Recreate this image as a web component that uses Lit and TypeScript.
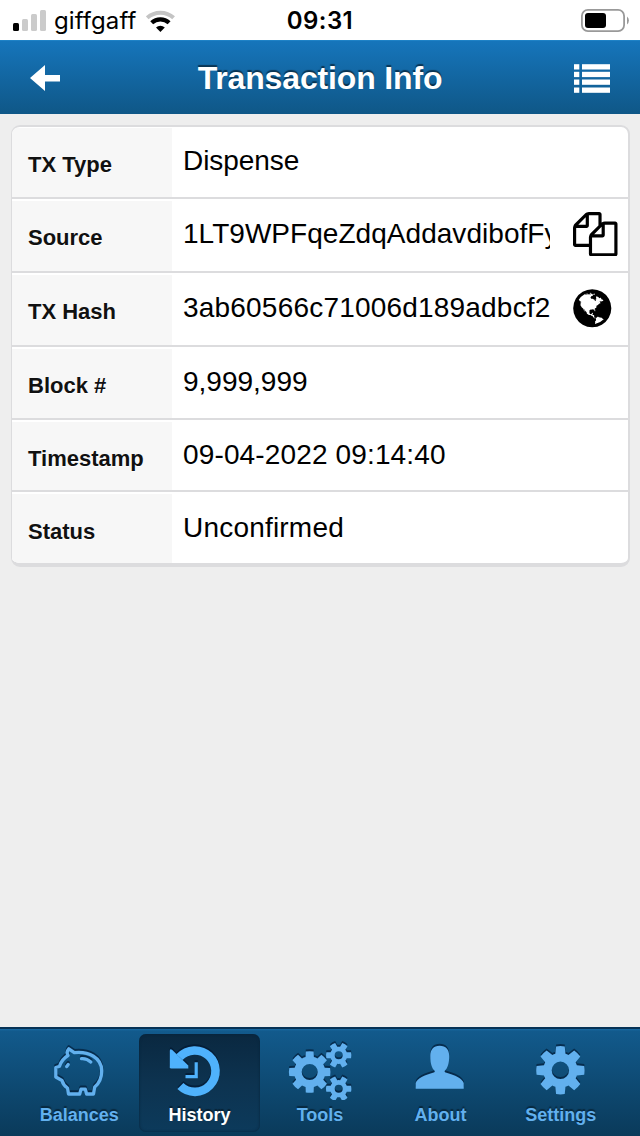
import { LitElement, html, css, svg } from "lit";
import { customElement } from "lit/decorators.js";
import { classMap } from "lit/directives/class-map.js";

/** Outline of a cog: trapezoid teeth around a body, with a round hole. */
function gear(cx: number, cy: number, outer: number, body: number, hole: number, teeth: number, base: number, tip: number): string {
  const pt = (r: number, a: number) => `${(cx + r * Math.cos(a)).toFixed(2)} ${(cy + r * Math.sin(a)).toFixed(2)}`;
  let d = "";
  for (let i = 0; i < teeth; i++) {
    const a = (i * 2 * Math.PI) / teeth;
    d += `${i ? `A${body} ${body} 0 0 1 ` : "M"}${pt(body, a - base)}L${pt(outer, a - tip)}A${outer} ${outer} 0 0 1 ${pt(outer, a + tip)}L${pt(body, a + base)}`;
  }
  d += `A${body} ${body} 0 0 1 ${pt(body, -base)}Z`;
  d += `M${cx + hole} ${cy}A${hole} ${hole} 0 1 0 ${cx - hole} ${cy}A${hole} ${hole} 0 1 0 ${cx + hole} ${cy}Z`;
  return d;
}

const COPY =
  "M1696 384q40 0 68 28t28 68v1216q0 40-28 68t-68 28h-960q-40 0-68-28t-28-68v-288h-544q-40 0-68-28t-28-68v-672q0-40 20-88t48-76l408-408q28-28 76-48t88-20h416q40 0 68 28t28 68v328q68-40 128-40h416zm-544 213l-299 299h299v-299zm-640-384l-299 299h299v-299zm196 647l316-316v-416h-384v416q0 40-28 68t-68 28h-416v640h512v-256q0-40 20-88t48-76zm956 804v-1152h-384v416q0 40-28 68t-68 28h-416v640h896z";

const GLOBE =
  "M896 128q209 0 385.5 103t279.5 279.5 103 385.5-103 385.5-279.5 279.5-385.5 103-385.5-103-279.5-279.5-103-385.5 103-385.5 279.5-279.5 385.5-103zm274 521q-2 1-9.5 9.5t-13.5 9.5q2 0 4.5-5t5-11 3.5-7q6-7 22-15 14-6 52-12 34-8 51 11-2-2 9.5-13t14.5-12q3-2 15-4.5t15-7.5l2-22q-12 1-17.5-7t-6.5-21q0 2-6 8 0-7-4.5-8t-11.5 1-9 1q-10-3-15-7.5t-8-16.5-4-15q-2-5-9.5-11t-9.5-10q-1-2-2.5-5.5t-3-6.5-4-5.5-5.5-2.5-7 5-7.5 10-4.5 5q-3-2-6-1.5t-4.5 1-4.5 3-5 3.5q-3 2-8.5 3t-8.5 2q15-5-1-11-10-4-16-3 9-4 7.5-12t-8.5-14h5q-1-4-8.5-8.5t-17.5-8.5-13-6q-8-5-34-9.5t-33-.5q-5 6-4.5 10.5t4 14 3.5 12.5q1 6-5.5 13t-6.5 12q0 7 14 15.5t10 21.5q-3 8-16 16t-16 12q-5 8-1.5 18.5t10.5 16.5q2 2 1.5 4t-3.5 4.5-5.5 4-6.5 3.5l-3 2q-11 5-20.5-6t-13.5-26q-7-25-16-30-23-8-29 1-5-13-41-26-25-9-58-4 6-1 0-15-7-15-19-12 3-6 4-17.5t1-13.5q3-13 12-23 1-1 7-8.5t9.5-13.5.5-6q35 4 50-11 5-5 11.500-17t10.500-17q9-6 14-5.500t14.500 5.500 14.500 5q14 1 15.500-11t-7.500-20q12 1 3-17-4-7-8-9-12-4-27 5-8 4 2 8-1-1-9.500 10.500t-16.500 17.500-16-5q-1-1-5.500-13.500t-9.500-13.500q-8 0-16 15 3-8-11-15t-24-8q19-12-8-27-7-4-20.500-5t-19.500 4q-5 7-5.500 11.500t5 8 10.500 5.500 11.500 4 8.500 3q14 10 8 14-2 1-8.500 3.500t-11.500 4.500-6 4q-3 4 0 14t-2 14q-5-5-9-17.500t-7-16.500q7 9-25 6l-10-1q-4 0-16 2t-20.500 1-13.500-8q-4-8 0-20 1-4 4-2-4-3-11-9.500t-10-8.500q-46 15-94 41 6 1 12-1 5-2 13-6.500t10-5.500q34-14 42-7l5-5q14 16 20 25-7-4-30-1-20 6-22 12 7 12 5 18-4-3-11.500-10t-14.500-11-15-5q-16 0-22 1-146 80-235 222 7 7 12 8 4 1 5 9t2.500 11 11.500-3q9 8 3 19 1-1 44 27 19 17 21 21 3 11-10 18-1-2-9-9t-9-4q-3 5 .5 18.500t10.500 12.500q-7 0-9.500 16t-2.500 35.500-1 23.500l2 1q-3 12 5.500 34.500t21.500 19.500q-13 3 20 43 6 8 8 9 3 2 12 7.500t15 10 10 10.500q4 5 10 22.500t14 23.500q-2 6 9.500 20t10.500 23q-1 0-2.500 1t-2.500 1q3 7 15.500 14t15.500 13q1 3 2 10t3 11 8 2q2-20-24-62-15-25-17-29-3-5-5.500-15.500t-4.500-14.500q2 0 6 1.500t8.500 3.500 7.500 4 2 3q-3 7 2 17.500t12 18.500 17 19 12 13q6 6 14 19.500t0 13.500q9 0 20 10.500t17 19.500q5 8 8 26t5 24q2 7 8.500 13.500t12.500 9.500l16 8 13 7q5 2 18.500 10.500t21.500 11.500q10 4 16 4t14.500-2.500 13.500-3.500q15-2 29 15t21 21q36 19 55 11-2 1 .5 7.500t8 15.500 9 14.500 5.500 8.500q5 6 18 15t18 15q6-4 7-9-3 8 7 20t18 10q14-3 14-32-31 15-49-18 0-1-2.500-5.500t-4-8.500-2.500-8.500 0-7.500 5-3q9 0 10-3.500t-2-12.500-4-13q-1-8-11-20t-12-15q-5 9-16 8t-16-9q0 1-1.500 5.500t-1.500 6.500q-13 0-15-1 1-3 2.500-17.500t3.500-22.500q1-4 5.500-12t7.500-14.500 4-12.500-4.500-9.500-17.500-2.500q-19 1-26 20-1 3-3 10.500t-5 11.500-9 7q-7 3-24 2t-24-5q-13-8-22.500-29t-9.500-37q0-10 2.500-26.500t3-25-5.500-24.500q3-2 9-9.500t10-10.500q2-1 4.500-1.500t4.500 0 4-1.500 3-6q-1-1-4-3-3-3-4-3 7 3 28.500-1.500t27.500 1.500q15 11 22-2 0-1-2.500-9.500t-.5-13.500q5 27 29 9 3 3 15.500 5t17.500 5q3 2 7 5.500t5.500 4.500 5-.5 8.500-6.500q10 14 12 24 11 40 19 44 7 3 11 2t4.500-9.500 0-14-1.500-12.500l-1-8v-18l-1-8q-15-3-18.500-12t1.500-18.500 15-18.500q1-1 8-3.500t15.500-6.500 12.500-8q21-19 15-35 7 0 11-9-1 0-5-3t-7.500-5-4.500-2q9-5 2-16 5-3 7.500-11t7.500-10q9 12 21 2 7-8 1-16 5-7 20.500-10.500t18.500-9.500q7 2 8-2t1-12 3-12q4-5 15-9t13-5l17-11q3-4 0-4 18 2 31-11 10-11-6-20 3-6-3-9.500t-15-5.500q3-1 11.500-.5t10.500-1.500q15-10-7-16-17-5-43 12zm-163 877q206-36 351-189-3-3-12.500-4.500t-12.500-3.500q-18-7-24-8 1-7-2.500-13t-8-9-12.500-8-11-7q-2-2-7-6t-7-5.500-7.500-4.500-8.500-2-10 1l-3 1q-3 1-5.500 2.500t-5.500 3-4 3 0 2.500q-21-17-36-22-5-1-11-5.500t-10.500-7-10-1.500-11.500 7q-5 5-6 15t-2 13q-7-5 0-17.500t2-18.500q-3-6-10.500-4.500t-12 4.500-11.500 8.500-9 6.500-8.500 5.500-8.500 7.500q-3 4-6 12t-5 11q-2-4-11.500-6.500t-9.500-5.500q2 10 4 35t5 38q7 31-12 48-27 25-29 40-4 22 12 26 0 7-8 20.500t-7 21.500q0 6 2 16z";

/** Tab glyphs, drawn in a 120x66 box centred over the tab's label. */
const tabIcons = {
  balances: svg`
    <g fill="none" stroke="currentColor" stroke-width="3.300" stroke-linejoin="round" stroke-linecap="round">
      <path d="M49.800 14.800L55.300 18.600C70 17 82.500 24 82.700 36.500C82.800 44 80.300 49 75.700 53L74.500 60H67.600L66.300 55.200H62L60.700 60H49.500L48.500 54C45.500 52 43.800 49.500 43 46.500L36.800 43V33.500L40.500 32.300C42 27 45 24 49 21.500C47.600 19 48 16.800 49.800 14.800Z"/>
      <path d="M62.500 24.700C66 24.400 69.200 25.600 71.800 28"/>
      <path d="M47.700 32.600L49.200 30.600"/>
    </g>`,
  history: svg`
    <path fill="none" stroke="currentColor" stroke-width="8.600" d="M39.500 23.200A20.700 20.700 0 1 1 40.400 52"/>
    <path fill="currentColor" d="M29.800 16.800Q30 14.300 32.300 16L48.300 31.500V34.500H31.300Q29.800 34.500 29.800 33.200Z"/>
    <path fill="none" stroke="currentColor" stroke-width="3.200" d="M56.200 28.200V42.600H45.500"/>`,
  tools: svg`
    <path fill="currentColor" fill-rule="evenodd" d="${gear(49.700, 38, 20.800, 15.600, 8, 8, 0.27, 0.19)}"/>
    <path fill="currentColor" fill-rule="evenodd" d="${gear(78.700, 21.300, 12.700, 8.600, 4, 6, 0.36, 0.24)}"/>
    <path fill="currentColor" fill-rule="evenodd" d="${gear(78.700, 54.700, 12.700, 8.600, 4, 6, 0.36, 0.24)}"/>`,
  about: svg`
    <path fill="currentColor" d="M59.600 11.800C66 11.800 69.200 15.800 69.200 22C69.200 29 67.800 34 64.600 37C64.600 38.200 65.200 38.400 66.500 38.800C75 41 82 44.500 83.700 49V54.800H35.700V49C37.400 44.500 44.400 41 52.900 38.800C54.200 38.400 54.800 38.200 54.800 37C51.600 34 50.300 29 50.300 22C50.300 15.800 53.500 11.800 59.600 11.800Z"/>`,
  settings: svg`
    <path fill="currentColor" fill-rule="evenodd" d="${gear(59.400, 36.300, 24.200, 17.200, 8.700, 8, 0.3, 0.18)}"/>`,
};

@customElement("status-bar")
class StatusBar extends LitElement {
  static styles = css`
    :host { display: grid; grid-template-columns: 1fr auto 1fr; align-items: center; height: 40px; background: #fff; color: #000; font-family: Inter, "Liberation Sans", sans-serif; font-size: 24px; }
    .side { display: flex; align-items: center; }
    .left { padding-left: 13px; }
    .right { justify-content: flex-end; padding-right: 11px; }
    svg { display: block; flex: none; }
    .carrier { margin: 0 9px 0 7px; width: 83px; white-space: nowrap; line-height: 40px; letter-spacing: 0.1px; }
    .time { font-weight: 600; letter-spacing: 0.400px; line-height: 41px; }
  `;
  render() {
    return html`
      <div class="side left">
        <svg width="34" height="40" viewBox="0 0 34 40">
          <rect x="0" y="22" width="6" height="8" rx="1.500" />
          <g fill="#cbcbcb">
            <rect x="9" y="18" width="6" height="12" rx="1.500" />
            <rect x="18" y="13" width="6" height="17" rx="1.500" />
            <rect x="27" y="9" width="6" height="21" rx="1.500" />
          </g>
        </svg>
        <span class="carrier">giffgaff</span>
        <svg width="30" height="40" viewBox="0 0 30 40">
          <path d="M1.200 16.800A19.500 19.500 0 0 1 27.600 16.800" fill="none" stroke="#c4c4c4" stroke-width="4" />
          <path d="M5.700 21.800A12.600 12.600 0 0 1 23.100 21.800" fill="none" stroke="#000" stroke-width="4.200" />
          <path d="M10 26.400A6.400 6.400 0 0 1 18.800 26.400L14.400 31Z" />
        </svg>
      </div>
      <span class="time">09:31</span>
      <div class="side right">
        <svg width="49" height="40" viewBox="0 0 49 40">
          <rect x="1.900" y="8.900" width="42.200" height="21.200" rx="6" fill="none" stroke="#999" stroke-width="1.800" />
          <rect x="5" y="12" width="21" height="15" rx="3" />
          <path d="M47 15.500Q48.900 17 48.900 19.500T47 23.500Z" fill="#999" />
        </svg>
      </div>`;
  }
}

@customElement("title-bar")
class TitleBar extends LitElement {
  static styles = css`
    :host { display: flex; align-items: center; justify-content: space-between; box-sizing: border-box; height: 74px; padding: 0 30px; border-top: 1px solid #1f82c6; background: linear-gradient(#1675bb, #0f5787); color: #fff; }
    h1 { margin: 0; font: bold 32px/74px "Liberation Sans", Arial, sans-serif; letter-spacing: -0.150px; text-shadow: 0 -2px 1px rgba(0, 0, 0, 0.5); }
    svg { display: block; }
    .arrow { margin-right: 6px; }
  `;
  render() {
    return html`
      <svg class="arrow" width="30" height="28" viewBox="0 0 30 28"><path fill="#fff" d="M0 14L15 1V11H30V17.500H15V27Z" /></svg>
      <h1>Transaction Info</h1>
      <svg width="36" height="30" viewBox="0 0 36 30" fill="#fff">
        ${[1.200, 8.800, 16.500, 24.500].map((y) => svg`<rect x="0" y=${y} width="5.300" height="5.300"/><rect x="8" y=${y} width="28" height="5.300"/>`)}
      </svg>`;
  }
}

interface Field {
  label: string;
  value: string;
  height: number;
  /** Letter spacing of the value, in px. */
  tracking: number;
  icon?: string;
}

@customElement("detail-card")
class DetailCard extends LitElement {
  static styles = css`
    :host { display: block; margin: 11px 10px 0 11px; border: 2px solid #dcdcde; border-width: 2px 2px 4px 1px; border-radius: 9px; background: #fff; overflow: hidden; font-family: "Liberation Sans", Arial, sans-serif; color: #000; }
    .row { display: grid; grid-template-columns: 160px 378px 1fr; }
    .row + .row { border-top: 2px solid #dcdcde; }
    .label { margin-top: 2px; padding: 24px 0 0 16px; background: #f7f7f7; color: #111; font-weight: bold; font-size: 22px; line-height: 26px; text-shadow: 0 1px 1px #fff; }
    .value { padding: 18px 0 0 11px; font-size: 28px; line-height: 34px; overflow: hidden; white-space: nowrap; }
    .icon { display: flex; align-items: center; padding: 0 0 2px 23px; }
    .icon svg { flex: none; }
    .globe { padding-left: 20px; }
    .row:first-child .label { margin-top: 1px; }
    .row:first-child .value { padding-top: 17px; }
    .row:last-child .label { padding-top: 25px; }
    .row:last-child .value { padding-top: 19px; }
  `;
  fields: Field[] = [
    { label: "TX Type", value: "Dispense", height: 70, tracking: -0.05 },
    { label: "Source", value: "1LT9WPFqeZdqAddavdibofFy", height: 72, tracking: 0.04, icon: "copy" },
    { label: "TX Hash", value: "3ab60566c71006d189adbcf2", height: 72, tracking: 0.2, icon: "globe" },
    { label: "Block #", value: "9,999,999", height: 71, tracking: 0 },
    { label: "Timestamp", value: "09-04-2022 09:14:40", height: 70, tracking: 0.14 },
    { label: "Status", value: "Unconfirmed", height: 71, tracking: 0.2 },
  ];
  render() {
    return this.fields.map(
      (f) => html`
        <div class="row" style="height:${f.height}px">
          <div class="label">${f.label}</div>
          <div class="value"><span style="letter-spacing:${f.tracking}px">${f.value}</span></div>
          ${f.icon
            ? html`<div class=${classMap({ icon: true, globe: f.icon === "globe" })}>
                <svg width="44.500" height="44.500" viewBox="0 0 1792 1792"><path d=${f.icon === "copy" ? COPY : GLOBE} /></svg>
              </div>`
            : null}
        </div>`
    );
  }
}

@customElement("tab-bar")
class TabBar extends LitElement {
  static styles = css`
    :host { display: grid; grid-template-columns: repeat(5, 1fr); box-sizing: border-box; height: 109px; padding: 5px 19px 4px; border-top: 2px solid #063256; background: linear-gradient(#1a6ca6 0, #125a8c 2px, #0a3a5a 100%); font-family: "Liberation Sans", Arial, sans-serif; }
    .tab { display: flex; flex-direction: column; align-items: center; border-radius: 7px; color: #62b0ee; font-size: 18px; font-weight: bold; text-shadow: 0 -2px 1px rgba(0, 0, 0, 0.4); }
    .tab svg { display: block; filter: drop-shadow(0 -1.500px 0.500px rgba(0, 20, 45, 0.6)); color: #62b0ee; }
    .tab span { line-height: 30px; }
    .tab.active { color: #fff; background: linear-gradient(#0a2840, #0d3350 50%, #0c3a5b); box-shadow: inset 0 0 3px #07243b; }
    .active svg { color: #4fb2fc; }
  `;
  tabs: [keyof typeof tabIcons, string][] = [
    ["balances", "Balances"],
    ["history", "History"],
    ["tools", "Tools"],
    ["about", "About"],
    ["settings", "Settings"],
  ];
  render() {
    return this.tabs.map(
      ([id, label]) => html`
        <div class=${classMap({ tab: true, active: id === "history" })}>
          <svg width="120" height="66" viewBox="0 0 120 66">${tabIcons[id]}</svg>
          <span>${label}</span>
        </div>`
    );
  }
}

@customElement("app-root")
class AppRoot extends LitElement {
  static styles = css`
    :host { display: flex; flex-direction: column; height: 1136px; background: #eee; overflow: hidden; }
    main { flex: 1; }
  `;
  render() {
    return html`
      <status-bar></status-bar>
      <title-bar></title-bar>
      <main><detail-card></detail-card></main>
      <tab-bar></tab-bar>`;
  }
}
